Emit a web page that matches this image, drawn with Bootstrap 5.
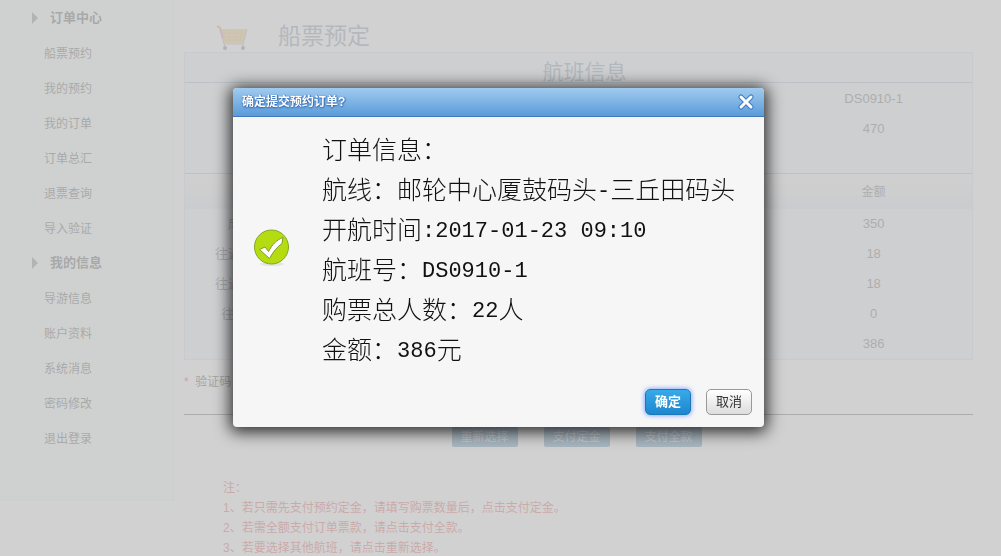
<!DOCTYPE html>
<html lang="zh-CN">
<head>
<meta charset="utf-8">
<meta name="viewport" content="width=device-width, initial-scale=1">
<title>船票预定</title>
<link href="https://cdn.jsdelivr.net/npm/bootstrap@5.3.0/dist/css/bootstrap.min.css" rel="stylesheet">
<style>
body{font:12px/20px "Liberation Sans","Noto Sans CJK SC",sans-serif;color:#666;background:#fff}
.side{width:174px;height:501px;background:#f9fffc;border:solid #eef3f1;border-width:0 1px 1px 0}
.side a{display:block;line-height:31px;padding:4px 0 0 44px;color:#777;text-decoration:none}
.side .group{font-size:13px;line-height:35px;font-weight:700;padding:0 0 0 32px;display:flex;align-items:center;gap:12px}
.side .group svg{flex:none}
.main-area{padding:0 28px 0 10px}
.title-row{padding-top:20px}
.page-title{font-size:23px;line-height:32px;color:#9aaac0;font-weight:400}
.sheet{background:#f4f7fd;border:1px solid #dfe7f2}
.sheet h2{font-size:21px;line-height:38px;height:30px;color:#9aaac0;border-bottom:1px solid #bcc8dc;margin:0 0 1px;padding-left:12px;text-align:center;font-weight:400}
.data{table-layout:fixed;width:100%;margin:0;text-align:center;color:#888}
.data td,.data th{height:30px;padding:0;font-weight:400}
.data .num{font-size:13px}
.data .kind{font-size:13px;white-space:nowrap;padding:0 76px 0 30px}
.flight{border-bottom:1px solid #bcc8dc;padding-bottom:29px}
.price thead th{height:35px;background:linear-gradient(#fafafa,#e9edf8)}
.code-row{height:55px;border-bottom:1px solid #888;padding-top:12px}
.code-row input{width:80px;height:20px}
.star{color:#e55}
.acts{gap:26px;margin:12px 4px 0 0}
.act{width:66px;height:20px;border:0;background:#75a3c5;color:#dbe8f5;padding:0;line-height:20px;border-radius:2px}
.notes{color:#e67a7a;padding-left:39px;margin-top:31px}
.modal-backdrop.show{opacity:.7;background:#bebebe}
.modal{padding-right:4px}
.modal-dialog{max-width:531px;margin-top:88px}
.modal-content{background:#f6f6f6;border:0;border-radius:4px;box-shadow:0 2px 16px 3px rgba(0,0,0,.8)}
.modal-header{height:29px;padding:0 10px 0 9px;border-radius:4px 4px 0 0;border-bottom:1px solid #3f78bd;background:linear-gradient(#a0cbee,#5b9bd9)}
.modal-title{font-size:12px;line-height:28px;font-weight:700;color:#fff;text-shadow:0 1px 2px #245ba8,1px 0 1px #3a70b8}
.shut{border:0;background:none;padding:0;width:16px;height:16px;display:flex}
.modal-body{padding:11px 20px 3px}
.info{font:25px/40px "Noto Sans CJK SC",sans-serif;font-weight:300;color:#111;margin-left:31px}
.info p{height:40px;margin:0;white-space:nowrap}
.info span{font-family:"Liberation Mono",monospace;font-size:22px;line-height:22px;vertical-align:2px}
.modal-footer{border:0;padding:18px 12px 12px;gap:15px}
.modal-footer>*{margin:0}
.dlg{width:46px;height:26px;padding:0;font-size:13px;line-height:24px;border-radius:5px;border:1px solid #999;background:linear-gradient(#fff,#ddd);color:#333}
.dlg.ok{border-color:#1c78b8;background:linear-gradient(#38aae8,#1d86cf);color:#fff;font-weight:700;box-shadow:0 0 5px #668cff}
</style>
</head>
<body>
<div class="d-flex align-items-start">
  <nav class="side flex-shrink-0">
    <a class="group" href="#"><svg width="6" height="12"><path d="M0 0l6 6-6 6z" fill="#999"/></svg>订单中心</a>
    <a href="#">船票预约</a><a href="#">我的预约</a><a href="#">我的订单</a><a href="#">订单总汇</a><a href="#">退票查询</a><a href="#">导入验证</a>
    <a class="group" href="#"><svg width="6" height="12"><path d="M0 0l6 6-6 6z" fill="#999"/></svg>我的信息</a>
    <a href="#">导游信息</a><a href="#">账户资料</a><a href="#">系统消息</a><a href="#">密码修改</a><a href="#">退出登录</a>
  </nav>
  <main class="main-area flex-grow-1">
    <div class="title-row d-flex align-items-end ps-4 ms-2">
      <svg width="34" height="27" viewBox="0 0 34 27"><path d="M4 4h27l-4 14H8z" fill="#f6d69a"/><path d="M7 8h22M7 12h21M8 15h20M13 5l1 13M19 5v13M25 5l-1 13" stroke="#f0cc90" fill="none"/><path d="M4 5l4 14h19l4-15" stroke="#bbb" fill="none"/><path d="M1 1l3 2 3 10" stroke="#eaa" stroke-width="2" fill="none"/><path d="M8 19l1 3M27 19v3" stroke="#bbb"/><circle cx="9" cy="23" r="2" fill="#999"/><circle cx="27" cy="23" r="2" fill="#999"/></svg>
      <h1 class="page-title ms-4 ps-1 mb-0">船票预定</h1>
    </div>
    <section class="sheet">
      <h2>航班信息</h2>
      <div class="flight">
        <table class="data">
          <tr><td></td><td></td><td></td><td class="num">DS0910-1</td></tr>
          <tr><td></td><td></td><td></td><td class="num">470</td></tr>
        </table>
      </div>
      <table class="data price">
        <thead><tr><th></th><th></th><th></th><th>金额</th></tr></thead>
        <tbody>
          <tr><td class="kind">成人往返票</td><td></td><td></td><td class="num">350</td></tr>
          <tr><td class="kind">往返票儿童半价</td><td></td><td></td><td class="num">18</td></tr>
          <tr><td class="kind">往返票老人半价</td><td></td><td></td><td class="num">18</td></tr>
          <tr><td class="kind">往返儿童免票</td><td></td><td></td><td class="num">0</td></tr>
          <tr><td></td><td></td><td></td><td class="num">386</td></tr>
        </tbody>
      </table>
    </section>
    <div class="code-row"><label for="code"><span class="star">*</span>&nbsp; 验证码</label> <input id="code" type="text"></div>
    <div class="acts d-flex justify-content-center">
      <button class="act" type="button">重新选择</button><button class="act" type="button">支付定金</button><button class="act" type="button">支付全款</button>
    </div>
    <div class="notes">
      <div>注：</div><div>1、若只需先支付预约定金，请填写购票数量后，点击支付定金。</div><div>2、若需全额支付订单票款，请点击支付全款。</div><div>3、若要选择其他航班，请点击重新选择。</div>
    </div>
  </main>
</div>
<div class="modal-backdrop show"></div>
<div class="modal show d-block" role="dialog" aria-labelledby="dlg-title">
  <div class="modal-dialog">
    <div class="modal-content">
      <div class="modal-header">
        <h2 class="modal-title" id="dlg-title">确定提交预约订单?</h2>
        <button class="shut" type="button" aria-label="关闭"><svg width="16" height="16" viewBox="0 0 16 16"><path d="M3 3l10 10M13 3L3 13" stroke="#3f7cc0" stroke-width="5" stroke-linecap="round"/><path d="M3 3l10 10M13 3L3 13" stroke="#fff" stroke-width="3" stroke-linecap="round"/></svg></button>
      </div>
      <div class="modal-body d-flex align-items-center">
        <svg class="flex-shrink-0" width="38" height="38" viewBox="0 0 38 38"><ellipse cx="19" cy="35" rx="12" ry="2" fill="#e4e4e4"/><circle cx="18.500" cy="18" r="17" fill="#b5dc10" stroke="#85a52a"/><path d="M6.500 20.500l5.500-2.500 3.500 4.500C19 16 23 11 30 8.500l-1 6C24 18 20 23 16.500 29.500z" fill="#fff" stroke="#7e9e22"/></svg>
        <div class="info">
          <p>订单信息：</p>
          <p>航线：邮轮中心厦鼓码头<span>-</span>三丘田码头</p>
          <p>开航时间<span>:2017-01-23 09:10</span></p>
          <p>航班号：<span>DS0910-1</span></p>
          <p>购票总人数：<span>22</span>人</p>
          <p>金额：<span>386</span>元</p>
        </div>
      </div>
      <div class="modal-footer">
        <button class="dlg ok" type="button">确定</button><button class="dlg" type="button">取消</button>
      </div>
    </div>
  </div>
</div>
<script src="https://cdn.jsdelivr.net/npm/bootstrap@5.3.0/dist/js/bootstrap.bundle.min.js"></script>
</body>
</html>
